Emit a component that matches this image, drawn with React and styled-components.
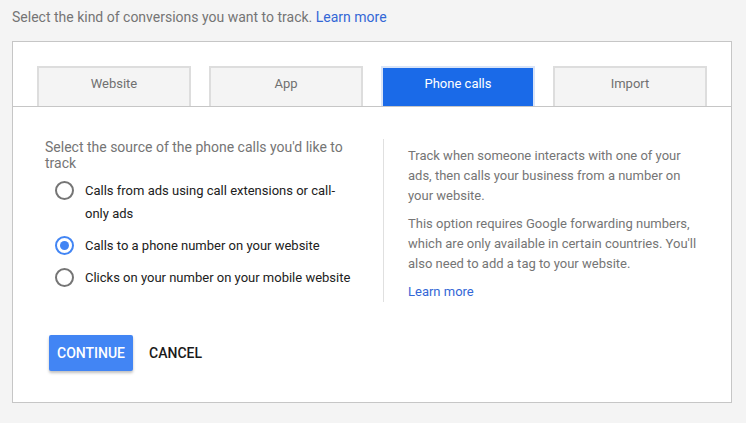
import React, { useState } from "react";
import styled, { createGlobalStyle } from "styled-components";

const Global = createGlobalStyle`
  html, body { margin: 0; padding: 0; background: #f4f4f4; }
  body { font-family: Roboto, "Noto Sans", Arial, sans-serif; -webkit-font-smoothing: antialiased; }
  * { box-sizing: border-box; }
`;

const Page = styled.div`
  width: 746px;
  height: 423px;
  padding: 7px 14px 0 12px;
  background: #f4f4f4;
`;

const Intro = styled.div`
  font-size: 14px;
  line-height: 20px;
  color: #757575;
  margin-bottom: 14px;
`;

const Link = styled.a`
  color: #3367d6;
  text-decoration: none;
  cursor: pointer;
`;

const Card = styled.div`
  background: #fff;
  border: 1px solid #c6c6c6;
`;

const TabBar = styled.div`
  display: flex;
  gap: 18px;
  padding: 24px 24px 0;
  border-bottom: 1px solid #c6c6c6;
`;

const Tab = styled.button`
  width: 154px;
  height: 40px;
  border: 2px solid ${(p) => (p.$active ? "#d9e4f7" : "#dddddd")};
  border-bottom: none;
  background: ${(p) => (p.$active ? "#1a6ae8" : "#f4f4f4")};
  color: ${(p) => (p.$active ? "#ffffff" : "#707070")};
  font-family: inherit;
  font-size: 13px;
  padding: 0 0 7px;
  cursor: pointer;
`;

const Body = styled.div`
  padding: 32px 32px 31px;
`;

const Columns = styled.div`
  display: flex;
  gap: 20px;
`;

const LeftCol = styled.div`
  flex: none;
  width: 318px;
`;

const Question = styled.div`
  font-size: 14px;
  line-height: 16px;
  color: #757575;
  margin-bottom: 8px;
`;

const Options = styled.div`
  display: flex;
  flex-direction: column;
  gap: 9px;
  padding-left: 10px;
`;

const Option = styled.label`
  display: flex;
  align-items: flex-start;
  gap: 11px;
  font-size: 13px;
  line-height: 23px;
  color: #212121;
  cursor: pointer;
`;

const OptionText = styled.span`
  max-width: 268px;
`;

const Radio = styled.span`
  flex: none;
  width: 19px;
  height: 19px;
  margin-top: 2px;
  border-radius: 50%;
  border: 2px solid ${(p) => (p.$checked ? "#4285f4" : "#757575")};
  display: flex;
  align-items: center;
  justify-content: center;
  &::after {
    content: "";
    width: 9px;
    height: 9px;
    border-radius: 50%;
    background: ${(p) => (p.$checked ? "#4285f4" : "transparent")};
  }
`;

const RightCol = styled.div`
  flex: 1;
  border-left: 1px solid #e0e0e0;
  padding: 7px 0 0 24px;
  font-size: 13px;
  line-height: 20px;
  color: #757575;
`;

const Para = styled.p`
  margin: 0 0 8px;
  width: 295px;
`;

const RightLink = styled(Link)`
  display: block;
  margin-top: 7px;
`;

const Actions = styled.div`
  display: flex;
  align-items: center;
  gap: 8px;
  margin-top: 33px;
  padding-left: 4px;
`;

const Button = styled.button`
  height: 36px;
  padding: 0 8px;
  border: none;
  border-radius: 2px;
  font-family: inherit;
  font-size: 14px;
  font-weight: 500;
  text-transform: uppercase;
  cursor: pointer;
  background: ${(p) => (p.$primary ? "#4285f4" : "transparent")};
  color: ${(p) => (p.$primary ? "#ffffff" : "#1a1a1a")};
  box-shadow: ${(p) => (p.$primary ? "0 2px 3px rgba(0,0,0,0.25)" : "none")};
`;

const tabs = ["Website", "App", "Phone calls", "Import"];
const options = [
  "Calls from ads using call extensions or call-only ads",
  "Calls to a phone number on your website",
  "Clicks on your number on your mobile website",
];

export default function App() {
  const [tab, setTab] = useState(2);
  const [choice, setChoice] = useState(1);
  return (
    <Page>
      <Global />
      <Intro>
        Select the kind of conversions you want to track. <Link>Learn more</Link>
      </Intro>
      <Card>
        <TabBar>
          {tabs.map((t, i) => (
            <Tab key={t} $active={i === tab} onClick={() => setTab(i)}>
              {t}
            </Tab>
          ))}
        </TabBar>
        <Body>
          <Columns>
            <LeftCol>
              <Question>Select the source of the phone calls you'd like to track</Question>
              <Options>
                {options.map((o, i) => (
                  <Option key={o} onClick={() => setChoice(i)}>
                    <Radio $checked={i === choice} />
                    <OptionText>{o}</OptionText>
                  </Option>
                ))}
              </Options>
            </LeftCol>
            <RightCol>
              <Para>
                Track when someone interacts with one of your ads, then calls your business
                from a number on your website.
              </Para>
              <Para>
                This option requires Google forwarding numbers, which are only available in
                certain countries. You'll also need to add a tag to your website.
              </Para>
              <RightLink>Learn more</RightLink>
            </RightCol>
          </Columns>
          <Actions>
            <Button $primary>Continue</Button>
            <Button>Cancel</Button>
          </Actions>
        </Body>
      </Card>
    </Page>
  );
}
